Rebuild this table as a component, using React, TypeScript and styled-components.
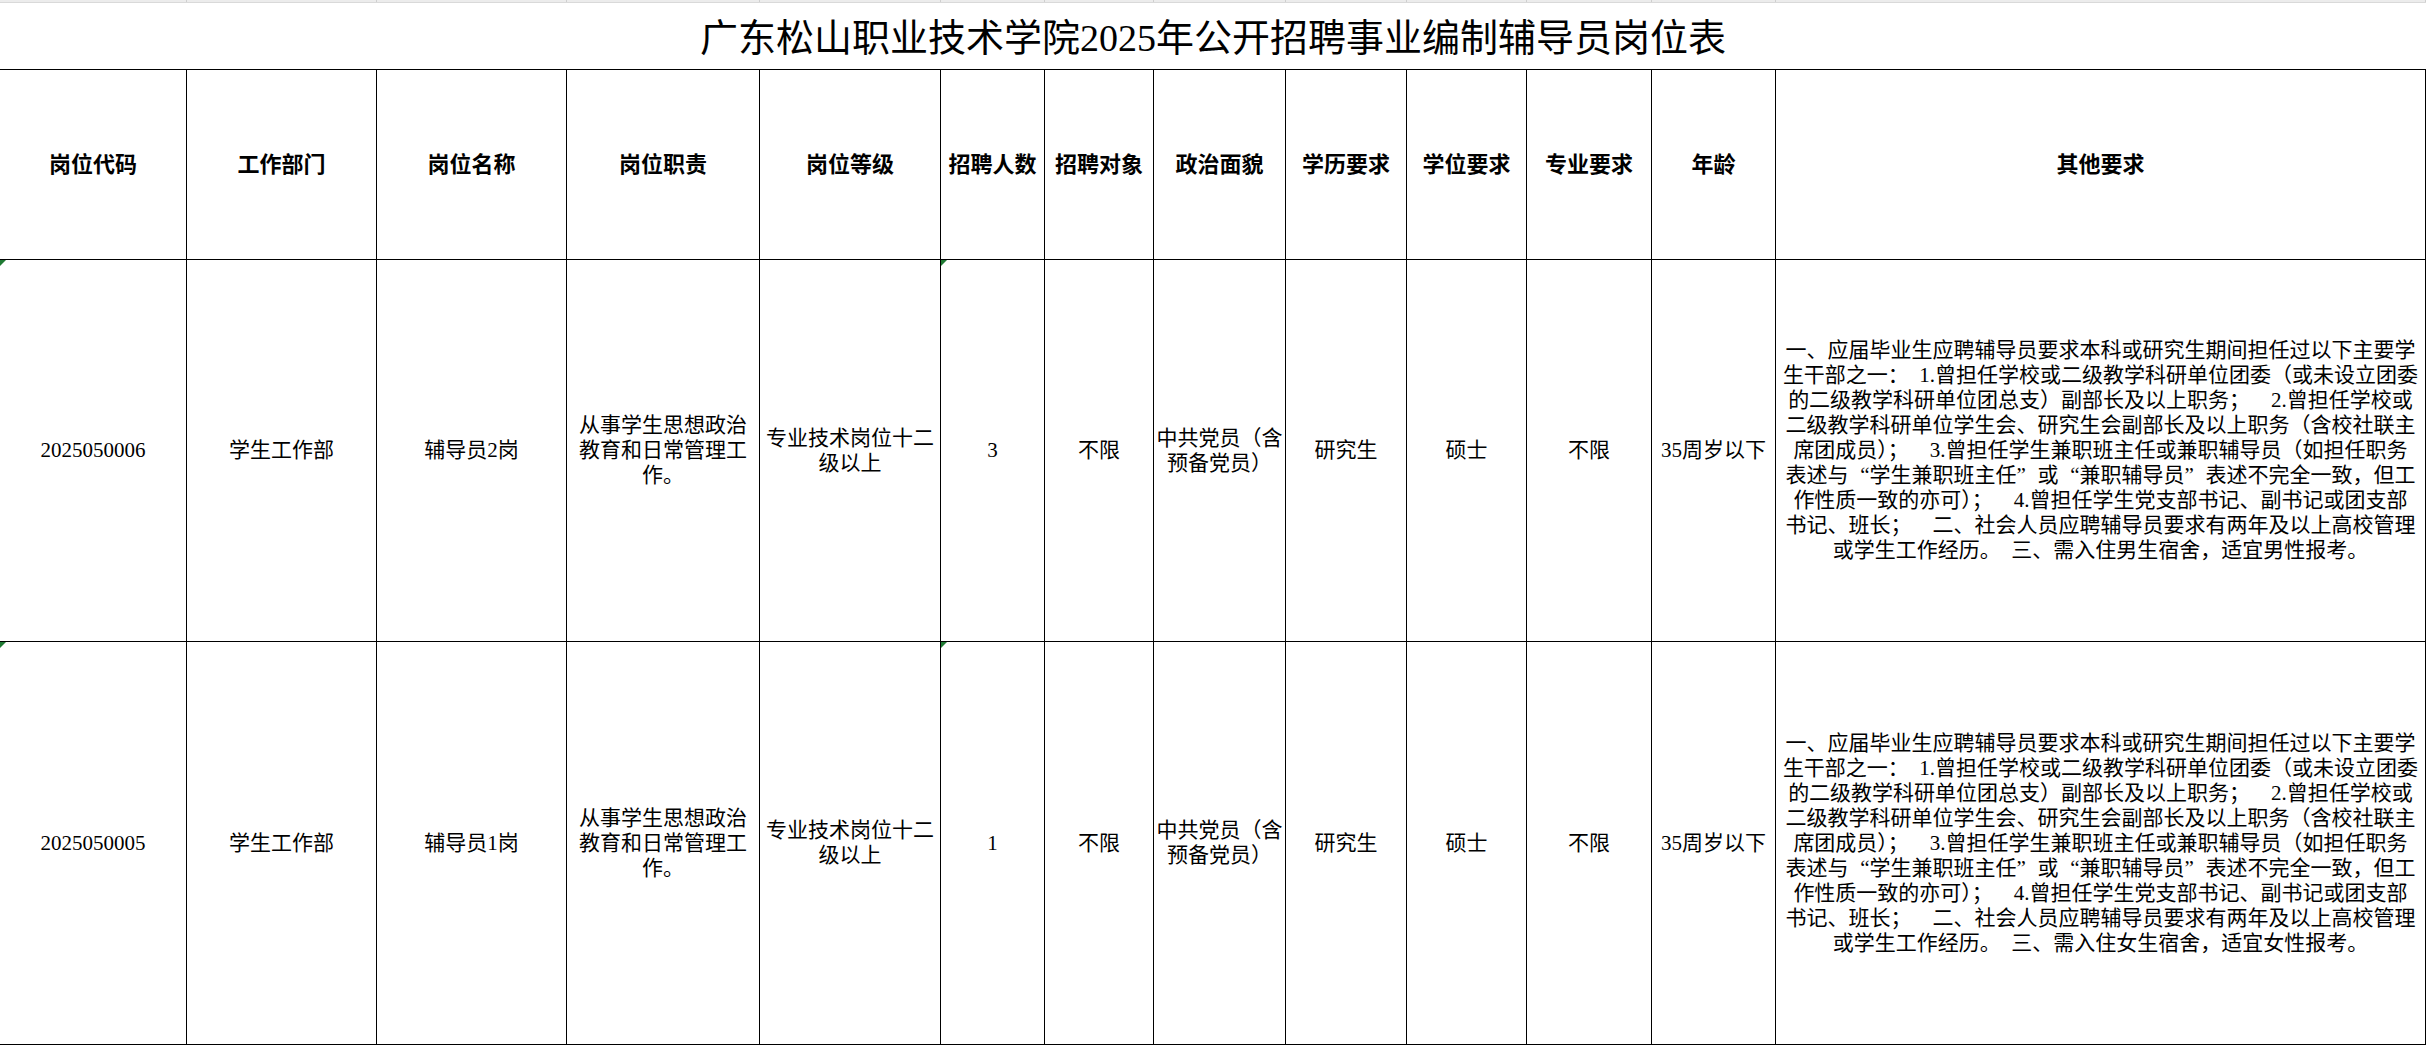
import React from "react";
import styled, { createGlobalStyle, css } from "styled-components";

const GlobalStyle = createGlobalStyle`
  html, body {
    margin: 0;
    padding: 0;
    background: #ffffff;
  }
  body {
    font-family: "Liberation Serif", "Noto Sans CJK SC", serif;
    color: #000000;
  }
`;

const COLS = [187, 190, 190, 193, 181, 104, 109, 132, 121, 120, 125, 124, 650];
const TEMPLATE = COLS.map((w) => `${w}px`).join(" ");

const Page = styled.div`
  width: 2435px;
  height: 1051px;
  overflow: hidden;
  background: #ffffff;
`;

const Strip = styled.div`
  display: grid;
  grid-template-columns: ${TEMPLATE};
  width: 2426px;
  height: 3px;
  background: #ececec;
  border-bottom: 1px solid #d9d9d9;
  box-sizing: border-box;
`;

const StripCell = styled.div`
  border-right: 1px solid #cfcfcf;
  box-sizing: border-box;
`;

const TitleBar = styled.div`
  width: 2426px;
  height: 67px;
  box-sizing: border-box;
  border-bottom: 1px solid #000000;
  display: flex;
  align-items: center;
  justify-content: center;
  padding-top: 4px;
  font-family: "Liberation Serif", "Noto Sans CJK SC", serif;
  font-size: 38px;
  font-weight: 400;
  line-height: 1;
`;

const Table = styled.div`
  display: grid;
  grid-template-columns: ${TEMPLATE};
  grid-template-rows: 190px 382px 403px;
  width: 2426px;
`;

const Cell = styled.div<{ $head?: boolean; $flag?: boolean }>`
  position: relative;
  box-sizing: border-box;
  border-right: 1px solid #000000;
  border-bottom: 1px solid #000000;
  display: flex;
  flex-direction: column;
  align-items: center;
  justify-content: center;
  text-align: center;
  font-family: "Liberation Serif", "Noto Sans CJK SC", serif;
  font-size: ${(p) => (p.$head ? "22px" : "21px")};
  font-weight: ${(p) => (p.$head ? 700 : 400)};
  line-height: 25px;
  white-space: pre;
  ${(p) =>
    p.$flag &&
    css`
      &::before {
        content: "";
        position: absolute;
        left: 0;
        top: 0;
        width: 0;
        height: 0;
        border-top: 6px solid #1f7a33;
        border-right: 6px solid transparent;
      }
    `}
`;

const Line = styled.div`
  white-space: pre;
`;

const Quote = styled.span<{ $open?: boolean }>`
  display: inline-block;
  width: 1em;
  text-align: ${(p) => (p.$open ? "right" : "left")};
`;

const HEADERS = [
  "岗位代码",
  "工作部门",
  "岗位名称",
  "岗位职责",
  "岗位等级",
  "招聘人数",
  "招聘对象",
  "政治面貌",
  "学历要求",
  "学位要求",
  "专业要求",
  "年龄",
  "其他要求",
];

const S = "\u2002";

const quoteLine = (
  <>
    表述与<Quote $open>“</Quote>学生兼职班主任<Quote>”</Quote>或<Quote $open>“</Quote>兼职辅导员
    <Quote>”</Quote>表述不完全一致，但工
  </>
);

const otherLines = (gender: string): React.ReactNode[] => [
  "一、应届毕业生应聘辅导员要求本科或研究生期间担任过以下主要学",
  `生干部之一：${S}1.曾担任学校或二级教学科研单位团委（或未设立团委`,
  `的二级教学科研单位团总支）副部长及以上职务；${S}${S}2.曾担任学校或`,
  "二级教学科研单位学生会、研究生会副部长及以上职务（含校社联主",
  `席团成员）；${S}${S}3.曾担任学生兼职班主任或兼职辅导员（如担任职务`,
  quoteLine,
  `作性质一致的亦可）；${S}${S}4.曾担任学生党支部书记、副书记或团支部`,
  `书记、班长；${S}${S}二、社会人员应聘辅导员要求有两年及以上高校管理`,
  `或学生工作经历。${S}三、需入住${gender}生宿舍，适宜${gender}性报考。`,
];

type Row = React.ReactNode[][];

const ROWS: Row[] = [
  [
    ["2025050006"],
    ["学生工作部"],
    ["辅导员2岗"],
    ["从事学生思想政治", "教育和日常管理工", "作。"],
    ["专业技术岗位十二", "级以上"],
    ["3"],
    ["不限"],
    ["中共党员（含", "预备党员）"],
    ["研究生"],
    ["硕士"],
    ["不限"],
    ["35周岁以下"],
    otherLines("男"),
  ],
  [
    ["2025050005"],
    ["学生工作部"],
    ["辅导员1岗"],
    ["从事学生思想政治", "教育和日常管理工", "作。"],
    ["专业技术岗位十二", "级以上"],
    ["1"],
    ["不限"],
    ["中共党员（含", "预备党员）"],
    ["研究生"],
    ["硕士"],
    ["不限"],
    ["35周岁以下"],
    otherLines("女"),
  ],
];

export default function App() {
  return (
    <Page>
      <GlobalStyle />
      <Strip>
        {COLS.map((_, i) => (
          <StripCell key={i} />
        ))}
      </Strip>
      <TitleBar>广东松山职业技术学院2025年公开招聘事业编制辅导员岗位表</TitleBar>
      <Table>
        {HEADERS.map((h) => (
          <Cell key={h} $head>
            {h}
          </Cell>
        ))}
        {ROWS.map((row, r) =>
          row.map((lines, c) => (
            <Cell key={`${r}-${c}`} $flag={c === 0 || c === 5}>
              {lines.map((l, i) => (
                <Line key={i}>{l}</Line>
              ))}
            </Cell>
          ))
        )}
      </Table>
    </Page>
  );
}
